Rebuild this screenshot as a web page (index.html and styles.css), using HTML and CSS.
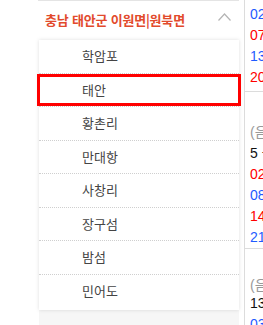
FILE: index.html
```html
<!DOCTYPE html>
<html lang="ko">
<head>
    <meta charset="UTF-8">
    <meta name="viewport" content="width=device-width, initial-scale=1.0">
    <title>물때표 지역 선택</title>
    <link rel="stylesheet" href="styles.css">
</head>
<body>
    <div class="page">
        <div class="side-gap"></div>

        <!-- Region picker -->
        <div class="picker">
            <div class="picker-head">
                <span class="picker-title">충남 태안군 이원면|원북면</span>
                <svg class="chevron" width="13" height="8" viewBox="0 0 13 8">
                    <polyline points="0.5,7.5 6.5,1 12.5,7.5" fill="none" stroke="#b4b4b4" stroke-width="1.2"/>
                </svg>
            </div>
            <ul class="picker-list">
                <li class="picker-item">학암포</li>
                <li class="picker-item is-selected">태안<span class="select-box"></span></li>
                <li class="picker-item">황촌리</li>
                <li class="picker-item">만대항</li>
                <li class="picker-item">사창리</li>
                <li class="picker-item">장구섬</li>
                <li class="picker-item">밤섬</li>
                <li class="picker-item last">민어도</li>
            </ul>
            <div class="picker-foot"></div>
        </div>

        <!-- Tide times column -->
        <div class="tides">
            <div class="tide-block first">
                <div class="t blue">02:41</div>
                <div class="t red">07:58</div>
                <div class="t blue">13:22</div>
                <div class="t red">20:09</div>
            </div>
            <div class="tide-block second">
                <div class="t gray">(음력 4.5)</div>
                <div class="t black">5 물</div>
                <div class="t red">02:17</div>
                <div class="t blue">08:36</div>
                <div class="t red">14:51</div>
                <div class="t blue">21:04</div>
            </div>
            <div class="tide-block third">
                <div class="t gray lunar">(음력 4.6)</div>
                <div class="t black">13 물</div>
                <div class="t blue">03:12</div>
            </div>
        </div>
    </div>
</body>
</html>
```

FILE: styles.css
```css
* {
    margin: 0;
    padding: 0;
    box-sizing: border-box;
}

body {
    font-family: "Noto Sans CJK KR", "Liberation Sans", sans-serif;
    background: #fff;
    color: #333;
    width: 263px;
    height: 325px;
    overflow: hidden;
}

.page {
    display: flex;
    height: 325px;
}

.side-gap {
    width: 38px;
    flex-shrink: 0;
}

/* Region picker */
.picker {
    width: 201px;
    flex-shrink: 0;
    display: flex;
    flex-direction: column;
}

.picker-head {
    height: 40px;
    border-top: 1px solid #e4e4e4;
    display: flex;
    align-items: center;
    justify-content: space-between;
    padding: 0 7px 3px 7px;
}

.picker-title {
    font-size: 13px;
    font-weight: bold;
    color: #e24a2c;
    letter-spacing: -0.2px;
}

.chevron {
    margin-right: 1px;
    margin-top: -4px;
}

.picker-list {
    list-style: none;
    margin-left: 1px;
    width: 200px;
    background: #fff;
    box-shadow: 0 0 4px rgba(0,0,0,0.13);
    position: relative;
}

.picker-item {
    position: relative;
    height: 33.5px;
    line-height: 32.5px;
    padding-left: 43px;
    font-size: 13px;
    color: #444;
    border-bottom: 1px dotted #cfcfcf;
}

.picker-item.last {
    border-bottom: none;
    height: 35px;
}

.select-box {
    position: absolute;
    top: 0;
    bottom: 0;
    left: -2px;
    right: -2px;
    border: 3px solid #f00;
}

.picker-foot {
    flex: 1;
    margin-left: 1px;
    width: 200px;
    background: #f6f6f6;
}

/* Tide column */
.tides {
    margin-left: 5px;
    border-left: 1px solid #dcdcdc;
    flex: 1;
    overflow: hidden;
    white-space: nowrap;
    font-family: "Liberation Sans", "Noto Sans CJK KR", sans-serif;
    font-size: 14px;
    padding-left: 5px;
}

.tide-block {
    margin-left: -5px;
    padding-left: 5px;
    border-bottom: 1px solid #dcdcdc;
}

.tide-block.first {
    padding-top: 4px;
    height: 92px;
}

.tide-block.second {
    padding-top: 30px;
    height: 157px;
}

.tide-block.third {
    padding-top: 28px;
    border-bottom: none;
}

.t {
    height: 21px;
    line-height: 21px;
}

.t.lunar {
    height: 16px;
    line-height: 16px;
}

.blue { color: #1f5bff; }
.red { color: #f00; }
.gray { color: #999; }
.black { color: #111; }
```
